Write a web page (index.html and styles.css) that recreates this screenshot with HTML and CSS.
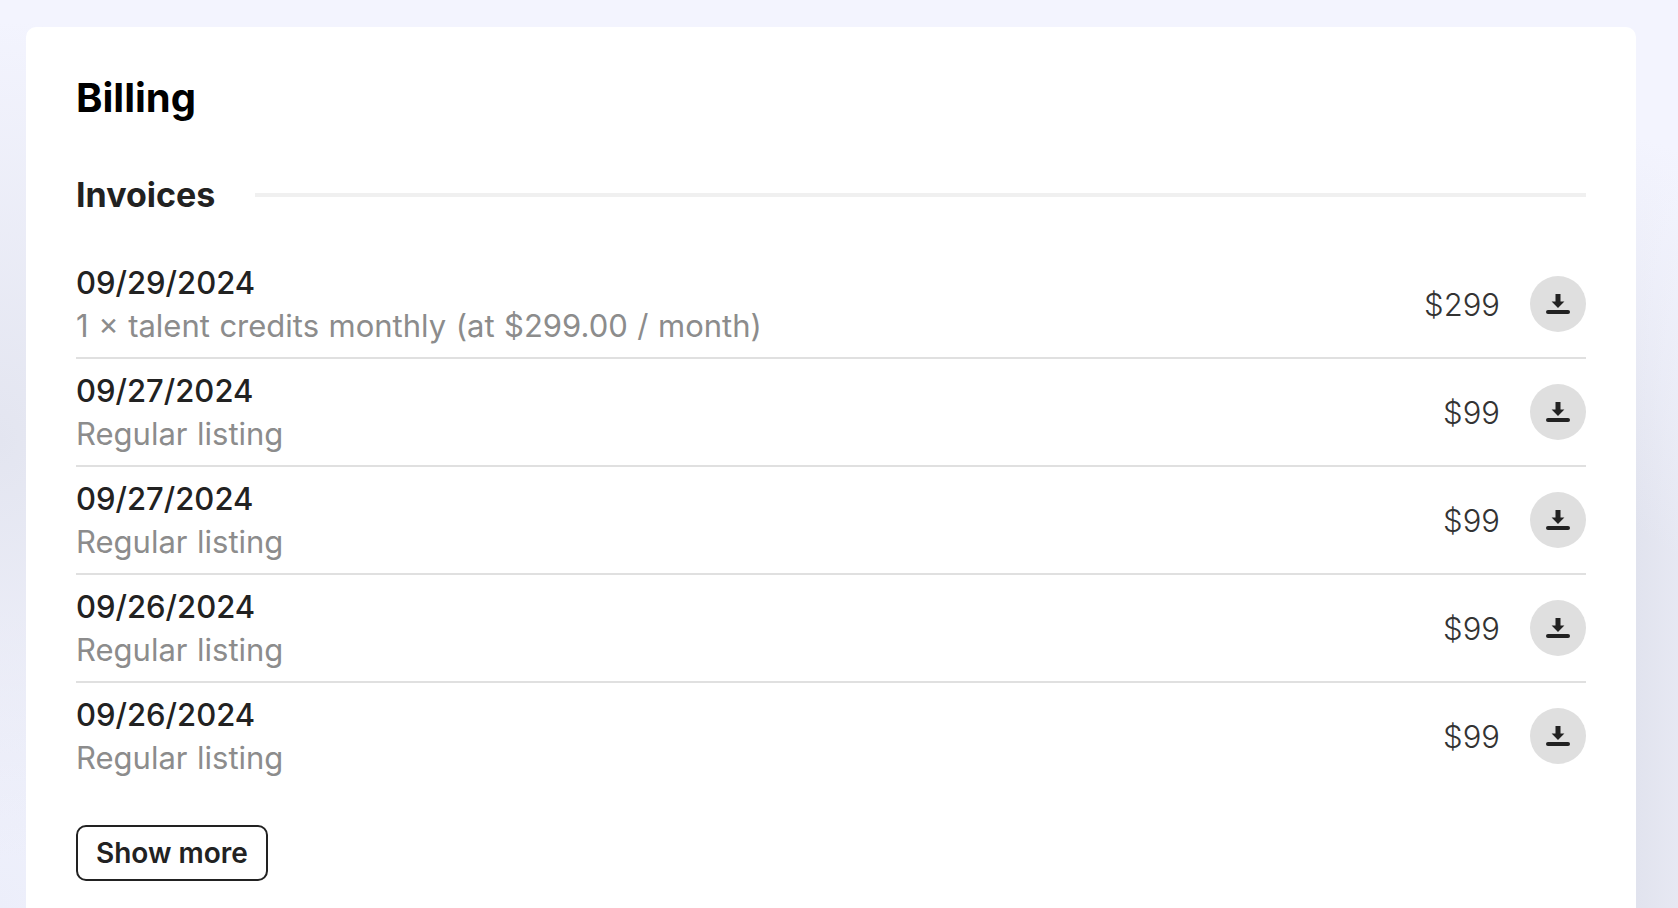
FILE: index.html
```html
<!DOCTYPE html>
<html lang="en">
<head>
  <meta charset="UTF-8" />
  <meta name="viewport" content="width=device-width, initial-scale=1.0"/>
  <title>Billing</title>
  <link rel="stylesheet" href="styles.css">
</head>
<body>
  <main class="card">
    <h1>Billing</h1>
    <div class="section-head">
      <h2>Invoices</h2>
      <div class="section-line"></div>
    </div>

    <ul class="invoices">
      <li class="invoice">
        <div class="invoice-info">
          <p class="invoice-date">09/29/2024</p>
          <p class="invoice-desc">1 × talent credits monthly (at $299.00 / month)</p>
        </div>
        <span class="invoice-amount">$299</span>
        <button class="download" aria-label="Download">
          <svg viewBox="0 0 24 24" width="24" height="24"><path d="M9.5 2h5v7.5h3.9L12 16 5.6 9.5h3.9z"/><rect x="0" y="18" width="24" height="4" rx="2"/></svg>
        </button>
      </li>
      <li class="invoice">
        <div class="invoice-info">
          <p class="invoice-date">09/27/2024</p>
          <p class="invoice-desc">Regular listing</p>
        </div>
        <span class="invoice-amount">$99</span>
        <button class="download" aria-label="Download">
          <svg viewBox="0 0 24 24" width="24" height="24"><path d="M9.5 2h5v7.5h3.9L12 16 5.6 9.5h3.9z"/><rect x="0" y="18" width="24" height="4" rx="2"/></svg>
        </button>
      </li>
      <li class="invoice">
        <div class="invoice-info">
          <p class="invoice-date">09/27/2024</p>
          <p class="invoice-desc">Regular listing</p>
        </div>
        <span class="invoice-amount">$99</span>
        <button class="download" aria-label="Download">
          <svg viewBox="0 0 24 24" width="24" height="24"><path d="M9.5 2h5v7.5h3.9L12 16 5.6 9.5h3.9z"/><rect x="0" y="18" width="24" height="4" rx="2"/></svg>
        </button>
      </li>
      <li class="invoice">
        <div class="invoice-info">
          <p class="invoice-date">09/26/2024</p>
          <p class="invoice-desc">Regular listing</p>
        </div>
        <span class="invoice-amount">$99</span>
        <button class="download" aria-label="Download">
          <svg viewBox="0 0 24 24" width="24" height="24"><path d="M9.5 2h5v7.5h3.9L12 16 5.6 9.5h3.9z"/><rect x="0" y="18" width="24" height="4" rx="2"/></svg>
        </button>
      </li>
      <li class="invoice">
        <div class="invoice-info">
          <p class="invoice-date">09/26/2024</p>
          <p class="invoice-desc">Regular listing</p>
        </div>
        <span class="invoice-amount">$99</span>
        <button class="download" aria-label="Download">
          <svg viewBox="0 0 24 24" width="24" height="24"><path d="M9.5 2h5v7.5h3.9L12 16 5.6 9.5h3.9z"/><rect x="0" y="18" width="24" height="4" rx="2"/></svg>
        </button>
      </li>
    </ul>

    <button class="show-more">Show more</button>
  </main>
</body>
</html>
```

FILE: styles.css
```css
html, body {
  height: 100%;
}

body {
  margin: 0;
  padding: 27px 42px 0 26px;
  box-sizing: border-box;
  overflow: hidden;
  font-family: 'Inter', sans-serif;
  color: #222;
  background-color: #f3f4fe;
  background-image:
    linear-gradient(to left, rgba(243, 244, 254, 0.3), rgba(243, 244, 254, 0) 42px),
    radial-gradient(300px 420px at 0 440px, #e3e5f0, rgba(227, 229, 240, 0)),
    radial-gradient(200px 300px at 0 908px, #eceefa, rgba(236, 238, 250, 0)),
    radial-gradient(800px 800px at 1400px 900px, #e1e3ee 55%, rgba(225, 227, 238, 0) 100%);
}

.card {
  background: #fff;
  border-radius: 10px 10px 0 0;
  padding: 49px 50px 0;
  box-sizing: border-box;
  height: 100%;
}

h1 {
  margin: 0 0 53px;
  font-size: 40px;
  line-height: 44px;
  font-weight: 700;
  color: #000;
}

.section-head {
  display: flex;
  align-items: center;
  gap: 40px;
  margin-bottom: 34px;
}

h2 {
  margin: 0;
  font-size: 34px;
  line-height: 44px;
  font-weight: 700;
}

.section-line {
  flex: 1;
  height: 4px;
  background: #f0f0f0;
}

.invoices {
  list-style: none;
  margin: 0;
  padding: 0;
}

.invoice {
  display: flex;
  align-items: center;
  height: 108px;
  box-sizing: border-box;
  border-bottom: 2px solid #e0e0e0;
}

.invoice:last-child {
  border-bottom-color: transparent;
}

.invoice-info {
  flex: 1;
}

.invoice-info p {
  margin: 0;
  font-size: 31px;
  line-height: 43px;
}

.invoice-date {
  font-weight: 500;
}

.invoice-desc {
  color: #8c8c8c;
  word-spacing: 0.8px;
}

.invoice-amount {
  font-size: 31px;
  font-weight: 300;
  color: #333;
  margin-right: 30px;
}

.download {
  width: 56px;
  height: 56px;
  padding: 0;
  border: 0;
  border-radius: 50%;
  background: #dfdfdf;
  display: flex;
  align-items: center;
  justify-content: center;
}

.download svg {
  fill: #222;
}

.show-more {
  margin-top: 34px;
  height: 56px;
  padding: 0 18px;
  background: #fff;
  border: 2px solid #222;
  border-radius: 10px;
  font-family: inherit;
  font-size: 28px;
  font-weight: 600;
  color: #222;
}
```
